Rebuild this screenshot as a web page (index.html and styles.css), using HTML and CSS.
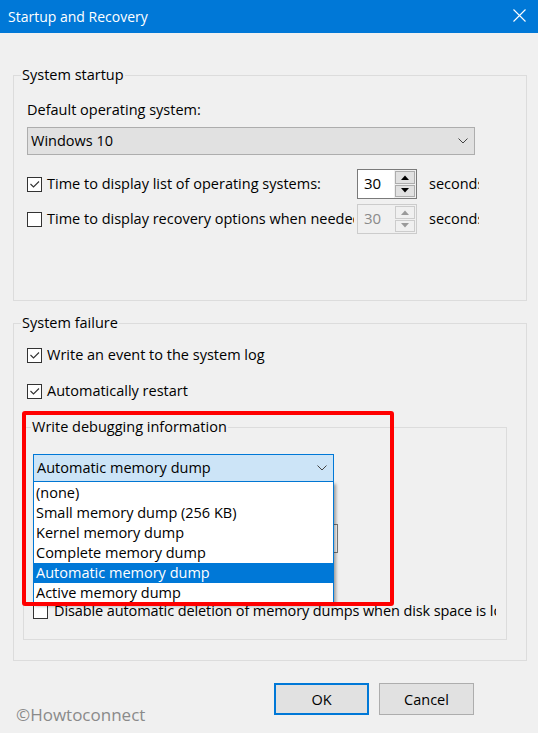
FILE: index.html
```html
<!DOCTYPE html>
<html lang="en">
<head>
<meta charset="utf-8">
<title>Startup and Recovery</title>
<link rel="stylesheet" href="styles.css">
</head>
<body>
<div class="dialog">
  <header class="titlebar">
    <span class="title">Startup and Recovery</span>
    <svg class="close" width="13" height="13" viewBox="0 0 13 13"><path d="M0.5 0.5L12.5 12.5M12.5 0.5L0.5 12.5" stroke="#fff" stroke-width="1.1" fill="none"/></svg>
  </header>

  <main class="content">
    <fieldset class="group startup">
      <legend>System startup</legend>
      <div class="group-body startup-body">
        <div class="field-label">Default operating system:</div>
        <div class="combo os-combo">
          <span class="combo-text">Windows 10</span>
          <svg class="chev" width="10" height="6" viewBox="0 0 10 6"><path d="M0.5 0.5L5 5L9.5 0.5" stroke="#444" stroke-width="1" fill="none"/></svg>
        </div>

        <div class="time-row first">
          <label class="check">
            <span class="box"><svg width="13" height="13" viewBox="0 0 13 13"><path d="M2.5 6L5.5 9L11 3.5" stroke="#333" stroke-width="1.1" fill="none"/></svg></span>
            <span class="check-text">Time to display list of operating systems:</span>
          </label>
          <div class="spin">
            <span class="spin-val">30</span>
            <span class="spin-btns">
              <span class="spin-btn"><svg width="8" height="5" viewBox="0 0 8 5"><path d="M0 5L4 0.5L8 5Z" fill="#000"/></svg></span>
              <span class="spin-btn"><svg width="8" height="5" viewBox="0 0 8 5"><path d="M0 0L4 4.5L8 0Z" fill="#000"/></svg></span>
            </span>
          </div>
          <span class="unit">seconds</span>
        </div>

        <div class="time-row second">
          <label class="check">
            <span class="box"></span>
            <span class="check-text">Time to display recovery options when needed:</span>
          </label>
          <div class="spin disabled">
            <span class="spin-val">30</span>
            <span class="spin-btns">
              <span class="spin-btn"><svg width="8" height="5" viewBox="0 0 8 5"><path d="M0 5L4 0.5L8 5Z" fill="#9a9a9a"/></svg></span>
              <span class="spin-btn"><svg width="8" height="5" viewBox="0 0 8 5"><path d="M0 0L4 4.5L8 0Z" fill="#9a9a9a"/></svg></span>
            </span>
          </div>
          <span class="unit">seconds</span>
        </div>
      </div>
    </fieldset>

    <fieldset class="group failure">
      <legend>System failure</legend>
      <div class="group-body failure-body">
        <label class="check row-event">
          <span class="box"><svg width="13" height="13" viewBox="0 0 13 13"><path d="M2.5 6L5.5 9L11 3.5" stroke="#333" stroke-width="1.1" fill="none"/></svg></span>
          <span class="check-text">Write an event to the system log</span>
        </label>
        <label class="check row-restart">
          <span class="box"><svg width="13" height="13" viewBox="0 0 13 13"><path d="M2.5 6L5.5 9L11 3.5" stroke="#333" stroke-width="1.1" fill="none"/></svg></span>
          <span class="check-text">Automatically restart</span>
        </label>

        <fieldset class="group debug">
          <legend>Write debugging information</legend>
          <div class="debug-body">
            <div class="debug-combo-wrap">
              <div class="combo debug-combo">
                <span class="combo-text">Automatic memory dump</span>
                <svg class="chev" width="10" height="6" viewBox="0 0 10 6"><path d="M0.5 0.5L5 5L9.5 0.5" stroke="#444" stroke-width="1" fill="none"/></svg>
              </div>
              <ul class="dump-list">
                <li>(none)</li>
                <li>Small memory dump (256 KB)</li>
                <li>Kernel memory dump</li>
                <li>Complete memory dump</li>
                <li class="selected">Automatic memory dump</li>
                <li>Active memory dump</li>
              </ul>
            </div>
            <div class="dump-label covered">Dump file:</div>
            <div class="dump-file"></div>
            <div class="check row-overwrite covered">
              <span class="box"></span>
              <span class="check-text">Overwrite any existing file</span>
            </div>
            <label class="check row-disable">
              <span class="box"></span>
              <span class="check-text">Disable automatic deletion of memory dumps when disk space is low</span>
            </label>
          </div>
        </fieldset>
      </div>
    </fieldset>
  </main>

  <footer class="footer">
    <span class="watermark">©Howtoconnect</span>
    <div class="buttons">
      <button class="btn ok">OK</button>
      <button class="btn cancel">Cancel</button>
    </div>
  </footer>

  <div class="highlight"></div>
</div>
</body>
</html>
```

FILE: styles.css
```css
* { box-sizing: border-box; }

html, body {
  margin: 0;
  padding: 0;
}

body {
  background: #f0f0f0;
  font-family: "Open Sans", "Noto Sans", sans-serif;
  font-size: 14.5px;
  line-height: 20px;
  color: #000;
  width: 538px;
  height: 733px;
  overflow: hidden;
}

.dialog {
  position: relative;
  width: 538px;
  height: 733px;
}

/* Title bar */
.titlebar {
  height: 33px;
  background: #0078d7;
  color: #fff;
  display: flex;
  align-items: center;
  justify-content: space-between;
  padding: 0 12px 0 8px;
}
.title {
  font-size: 14px;
  line-height: 33px;
}
.close { display: block; margin-top: -2px; }

/* Content */
.content {
  padding: 31px 11px 0 13px;
}

.group {
  margin: 0;
  border: 1px solid #dcdcdc;
  padding: 0 0 0 7px;
  min-width: 0;
}
.group legend {
  padding: 0 1px;
  line-height: 22px;
}

.startup { padding-bottom: 66px; }
.startup-body { padding: 14px 0 0 6px; }

.failure { margin-top: 11px; padding-bottom: 20px; }
.failure-body { padding: 0; }

.field-label { height: 20px; }

/* Combo boxes */
.combo {
  height: 28px;
  display: flex;
  align-items: center;
  justify-content: space-between;
  padding: 0 6px 0 3px;
  white-space: nowrap;
}
.os-combo {
  margin-top: 7px;
  width: 448px;
  background: #e1e1e1;
  border: 1px solid #adadad;
}
.chev { display: block; }

/* Time rows */
.time-row {
  display: flex;
  align-items: center;
  height: 30px;
}
.time-row.first { margin-top: 14px; }
.time-row.second { margin-top: 5px; }
.time-row .check { width: 327px; }

.check {
  display: flex;
  align-items: center;
  height: 20px;
  white-space: nowrap;
  overflow: hidden;
}
.box {
  flex: none;
  width: 15px;
  height: 15px;
  border: 1px solid #333;
  background: #fff;
  margin-right: 5px;
}
.box svg { display: block; }

.spin {
  margin-left: 3px;
  width: 60px;
  height: 30px;
  display: flex;
  border: 1px solid #7a7a7a;
  background: #fff;
}
.spin-val {
  flex: 1;
  padding-left: 6px;
  line-height: 26px;
  font-size: 15px;
}
.spin-btns {
  width: 22px;
  display: flex;
  flex-direction: column;
  gap: 1px;
  padding: 1px;
  background: #f0f0f0;
}
.spin-btn {
  flex: 1;
  background: #e1e1e1;
  border: 1px solid #adadad;
  display: flex;
  align-items: center;
  justify-content: center;
}
.spin-btn svg { display: block; }

.spin.disabled { border-color: #cccccc; background: #f0f0f0; }
.spin.disabled .spin-val { color: #8a8a8a; }
.spin.disabled .spin-btn { background: #f0f0f0; border-color: #cccccc; }

.unit {
  margin-left: 12px;
  width: 50px;
  overflow: hidden;
  white-space: nowrap;
}

/* System failure rows */
.row-event { margin: 11px 0 0 6px; }
.row-restart { margin: 16px 0 0 6px; }

.debug {
  margin: 15px 0 0 2px;
  width: 484px;
  padding-bottom: 18px;
}
.debug-body { padding: 16px 0 0 2px; }

.debug-combo-wrap {
  position: relative;
  width: 301px;
}
.debug-combo {
  background: #cce4f7;
  border: 1px solid #0078d7;
  padding-left: 3px;
}

.dump-list {
  position: absolute;
  top: 100%;
  left: 0;
  width: 301px;
  margin: 0;
  padding: 1px 0 0;
  list-style: none;
  background: #fff;
  border: 1px solid #0078d7;
  border-top: none;
  box-shadow: 2px 2px 3px rgba(0, 0, 0, 0.35);
  z-index: 2;
}
.dump-list li {
  height: 20px;
  line-height: 20px;
  padding-left: 2px;
  white-space: nowrap;
}
.dump-list li.selected {
  background: #0078d7;
  color: #fff;
}

/* controls hidden behind the open drop-down list */
.covered { visibility: hidden; }

.dump-label { margin-top: 6px; height: 20px; }
.dump-file {
  margin-top: 16px;
  width: 305px;
  height: 29px;
  border: 1px solid #7a7a7a;
  background: #fff;
}
.row-overwrite { margin-top: 13px; }
.row-disable { margin-top: 15px; width: 463px; letter-spacing: -0.1px; }
.row-disable .box { margin-right: 6px; }

/* Footer */
.footer {
  display: flex;
  justify-content: space-between;
  align-items: flex-start;
  padding: 22px 64px 0 16px;
}
.watermark {
  margin-top: 20px;
  font-size: 17px;
  line-height: 24px;
  color: #8a8a8a;
}
.buttons {
  display: flex;
  gap: 10px;
}
.btn {
  width: 95px;
  height: 32px;
  background: #e1e1e1;
  font-family: "Open Sans", "Noto Sans", sans-serif;
  font-size: 14.5px;
  color: #000;
  padding: 0;
  margin: 0;
  border-radius: 0;
}
.btn.ok { border: 2px solid #0078d7; }
.btn.cancel { border: 1px solid #adadad; }

/* Red annotation rectangle */
.highlight {
  position: absolute;
  left: 22px;
  top: 411px;
  width: 372px;
  height: 195px;
  border: 4px solid #ff0000;
  border-radius: 3px;
  z-index: 5;
  pointer-events: none;
}
```
